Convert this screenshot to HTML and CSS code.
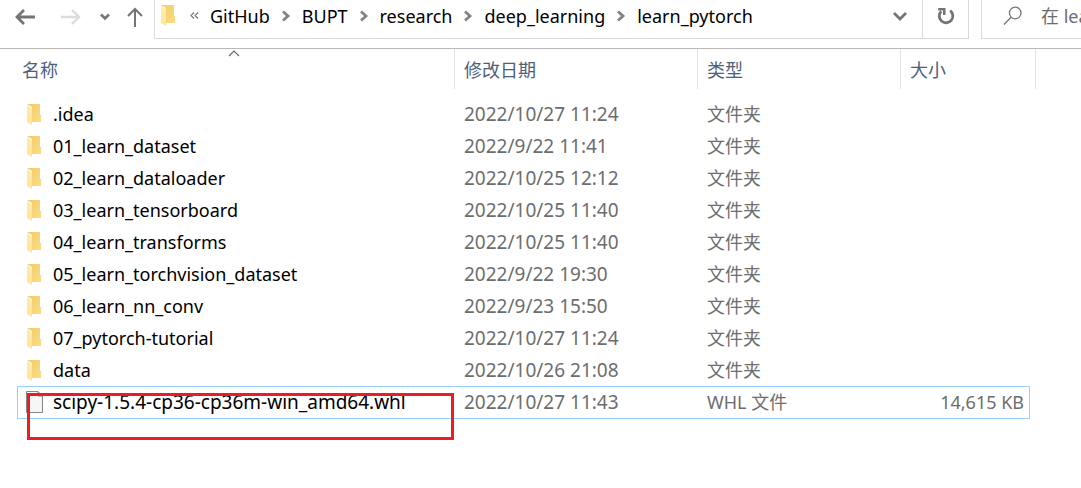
FILE: index.html
```html
<!DOCTYPE html>
<html lang="zh-CN">
<head>
<meta charset="utf-8">
<meta name="viewport" content="width=device-width, initial-scale=1">
<title>learn_pytorch</title>
<link rel="stylesheet" href="styles.css">
</head>
<body>
<svg class="defs" aria-hidden="true">
  <defs>
    <linearGradient id="back" x1="0" y1="0" x2="1" y2="1">
      <stop offset="0" stop-color="#f0cb68"/><stop offset="1" stop-color="#fbdc85"/>
    </linearGradient>
    <linearGradient id="front" x1="0" y1="0" x2="0" y2="1">
      <stop offset="0" stop-color="#ffedb0"/><stop offset="1" stop-color="#ffe491"/>
    </linearGradient>
  </defs>
  <symbol id="folder" viewBox="0 0 14 21">
    <path fill="url(#back)" d="M0 0H13V11H14V18H5V3Z"/>
    <path fill="url(#front)" d="M0 0.5L5 4V21L0 18Z"/>
  </symbol>
  <symbol id="sep" viewBox="0 0 10 12">
    <path d="M2 1.5L7 6L2 10.5" fill="none" stroke="#828282" stroke-width="2.8"/>
  </symbol>
</svg>

<header class="toolbar">
  <nav class="history">
    <button class="tool" aria-label="后退"><svg width="20" height="18" viewBox="0 0 20 18"><path d="M20 9H2M9 2L2 9L9 16" fill="none" stroke="#747474" stroke-width="2.8"/></svg></button>
    <button class="tool forward" aria-label="前进" disabled><svg width="20" height="18" viewBox="0 0 20 18"><path d="M0 9H18M11 2L18 9L11 16" fill="none" stroke="#dcdcdc" stroke-width="2.4"/></svg></button>
    <button class="tool recent" aria-label="最近浏览的位置"><svg width="10" height="8" viewBox="0 0 10 8"><path d="M1 1.5L5 5.5L9 1.5" fill="none" stroke="#747474" stroke-width="2.6"/></svg></button>
    <button class="tool up" aria-label="上移"><svg width="16" height="20" viewBox="0 0 16 20"><path d="M8 20V2M1 9L8 2L15 9" fill="none" stroke="#747474" stroke-width="2"/></svg></button>
  </nav>
  <div class="address">
    <svg class="folder" width="14" height="21"><use href="#folder"/></svg>
    <svg class="more" width="9" height="7" viewBox="0 0 9 7"><path d="M4 .5L1 3.5L4 6.5M8 .5L5 3.5L8 6.5" fill="none" stroke="#777" stroke-width="1.2"/></svg>
    <nav class="crumbs">
      <a href="#">GitHub</a><svg width="10" height="12"><use href="#sep"/></svg>
      <a href="#">BUPT</a><svg width="10" height="12"><use href="#sep"/></svg>
      <a href="#">research</a><svg width="10" height="12"><use href="#sep"/></svg>
      <a href="#">deep_learning</a><svg width="10" height="12"><use href="#sep"/></svg>
      <a href="#">learn_pytorch</a>
    </nav>
    <button class="tool drop" aria-label="以前的位置"><svg width="14" height="10" viewBox="0 0 14 10"><path d="M1 2L7 8L13 2" fill="none" stroke="#747474" stroke-width="2.8"/></svg></button>
    <button class="tool refresh" aria-label="刷新"><svg width="18" height="18" viewBox="0 0 18 18"><path d="M4.2 4.2A6.8 6.8 0 1 0 13.2 3.6" fill="none" stroke="#747474" stroke-width="2.8"/><path d="M1.2 1H8.5V8H6V3.4H1.2Z" fill="#747474"/></svg></button>
  </div>
  <div class="search">
    <svg width="20" height="20" viewBox="0 0 20 20"><circle cx="12.2" cy="7" r="5.8" fill="none" stroke="#777" stroke-width="1.3"/><path d="M8 11.2L1 18.5" stroke="#777" stroke-width="1.3"/></svg>
    <input type="text" aria-label="搜索" placeholder="在 learn_pytorch">
  </div>
</header>

<main class="files">
  <table class="list">
    <colgroup><col><col class="c-date"><col class="c-type"><col class="c-size"><col class="c-end"></colgroup>
    <thead>
      <tr>
        <th scope="col">名称<svg class="sort" width="12" height="7" viewBox="0 0 12 7"><path d="M1 6L6 1L11 6" fill="none" stroke="#666" stroke-width="1.2"/></svg></th>
        <th scope="col">修改日期</th><th scope="col">类型</th><th scope="col" colspan="2">大小</th>
      </tr>
    </thead>
    <tbody>
      <tr><td><span class="name"><svg width="14" height="21"><use href="#folder"/></svg>.idea</span></td><td>2022/10/27 11:24</td><td>文件夹</td><td></td></tr>
      <tr><td><span class="name"><svg width="14" height="21"><use href="#folder"/></svg>01_learn_dataset</span></td><td>2022/9/22 11:41</td><td>文件夹</td><td></td></tr>
      <tr><td><span class="name"><svg width="14" height="21"><use href="#folder"/></svg>02_learn_dataloader</span></td><td>2022/10/25 12:12</td><td>文件夹</td><td></td></tr>
      <tr><td><span class="name"><svg width="14" height="21"><use href="#folder"/></svg>03_learn_tensorboard</span></td><td>2022/10/25 11:40</td><td>文件夹</td><td></td></tr>
      <tr><td><span class="name"><svg width="14" height="21"><use href="#folder"/></svg>04_learn_transforms</span></td><td>2022/10/25 11:40</td><td>文件夹</td><td></td></tr>
      <tr><td><span class="name"><svg width="14" height="21"><use href="#folder"/></svg>05_learn_torchvision_dataset</span></td><td>2022/9/22 19:30</td><td>文件夹</td><td></td></tr>
      <tr><td><span class="name"><svg width="14" height="21"><use href="#folder"/></svg>06_learn_nn_conv</span></td><td>2022/9/23 15:50</td><td>文件夹</td><td></td></tr>
      <tr><td><span class="name"><svg width="14" height="21"><use href="#folder"/></svg>07_pytorch-tutorial</span></td><td>2022/10/27 11:24</td><td>文件夹</td><td></td></tr>
      <tr><td><span class="name"><svg width="14" height="21"><use href="#folder"/></svg>data</span></td><td>2022/10/26 21:08</td><td>文件夹</td><td></td></tr>
      <tr class="focused"><td><span class="name file"><svg width="17" height="22" viewBox="0 0 17 22"><path d="M.5 .5H12L16.500 5V21.500H.5Z" fill="#f4f6f7" stroke="#858585"/><path d="M12 .5V5H16.500" fill="none" stroke="#858585"/></svg>scipy-1.5.4-cp36-cp36m-win_amd64.whl</span><span class="mark"></span></td><td>2022/10/27 11:43</td><td>WHL 文件</td><td>14,615 KB</td></tr>
    </tbody>
  </table>
</main>
</body>
</html>
```
FILE: styles.css
```css
* { box-sizing: border-box; }

body {
  margin: 0;
  background: #fff;
  color: #000;
  font: 18px/24px "Noto Sans", "Noto Sans CJK SC", sans-serif;
  overflow-x: hidden;
}

svg { display: block; flex: none; }
.defs { position: absolute; width: 0; height: 0; }

.tool {
  display: flex;
  align-items: center;
  justify-content: center;
  padding: 0;
  border: 0;
  background: none;
}

.toolbar {
  display: flex;
  height: 49px;
  padding-bottom: 9px;
  border-bottom: 1px solid #b8b8b8;
}

.history {
  display: flex;
  align-items: center;
  flex: none;
  width: 154px;
  height: 33px;
  padding-left: 15px;
}
.forward { margin-left: 26px; }
.recent { margin-left: 19px; }
.up { margin-left: 17px; }

.address {
  display: flex;
  flex: 1;
  min-width: 0;
  border: 1px solid #d9d9d9;
  border-top: 0;
}
.address .folder { margin: 5px 0 0 6px; }
.more { margin: 12px 0 0 15px; }

.crumbs {
  display: flex;
  flex: 1;
  align-items: center;
  gap: 11px;
  height: 32px;
  min-width: 0;
  padding-left: 11px;
  overflow: hidden;
}
.crumbs a { color: #000; text-decoration: none; }

.drop { width: 44px; height: 32px; }
.refresh {
  width: 46px;
  padding-bottom: 6px;
  border-left: 1px solid #d9d9d9;
}

.search {
  display: flex;
  flex: none;
  width: 100px;
  margin-left: 12px;
  padding: 0 0 6px 21px;
  align-items: center;
  border: solid #d9d9d9;
  border-width: 0 0 1px 1px;
}
.search input {
  flex: 1;
  min-width: 0;
  margin-left: 18px;
  padding: 0;
  border: 0;
  outline: 0;
  background: none;
  font: inherit;
}
.search input::placeholder { color: #6d6d6d; opacity: 1; }

.files { padding: 0 45px 48px 17px; }

.list {
  width: 100%;
  table-layout: fixed;
  border-collapse: separate;
  border-spacing: 0;
}
.c-date { width: 243px; }
.c-type { width: 203px; }
.c-size { width: 129px; }
.c-end { width: 6px; }

th {
  position: relative;
  height: 40px;
  padding: 2px 9px 0;
  border-right: 1px solid #e2e2e2;
  color: #4c607a;
  font-weight: 400;
  text-align: left;
}
th:first-child { padding-left: 5px; }
.sort { position: absolute; top: 1px; left: 50%; margin-left: -8px; }
thead::after { content: ""; display: block; height: 9px; }

td {
  height: 32px;
  padding: 0 9px;
  color: #6d6d6d;
  white-space: nowrap;
}
td:first-child { position: relative; padding-left: 10px; color: #000; }
td:nth-child(2) { font-size: 19px; }
td:nth-child(4) { padding-right: 6px; text-align: right; }

.name { display: flex; align-items: center; gap: 12px; }
.file { gap: 10px; font-size: 19px; }

.focused td {
  height: 33px;
  padding-bottom: 2px;
  border: solid #99d1ff;
  border-width: 1px 0;
}
.focused td:first-child { padding-left: 8px; border-left-width: 1px; }
.focused td:nth-child(4) { padding-right: 5px; border-right-width: 1px; }

/* Highlight frame drawn over the selected file */
.mark {
  position: absolute;
  top: 6px;
  left: 9px;
  right: 1px;
  height: 47px;
  border: 3px solid #ed1c24;
}
```
